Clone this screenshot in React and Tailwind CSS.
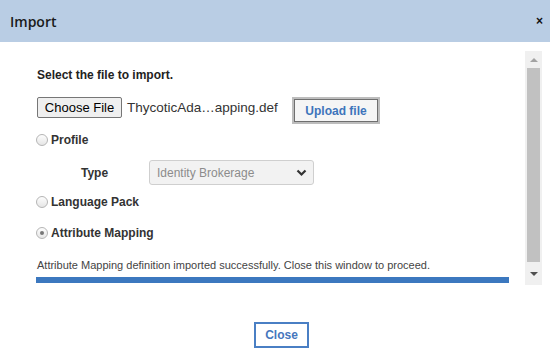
export default function App() {
  const radio = (checked) => (
    <span className="w-[12px] h-[12px] rounded-full border border-[#b5b5b5] bg-gradient-to-b from-[#fdfdfd] to-[#e6e6e6] flex items-center justify-center shrink-0">
      {checked && <span className="w-[4px] h-[4px] rounded-full bg-[#777]" />}
    </span>
  );
  return (
    <div className="w-[550px] h-[360px] bg-white flex flex-col overflow-hidden" style={{ fontFamily: '"Liberation Sans", Arial, sans-serif' }}>
      <div className="h-[42px] bg-[#b9cde4] flex items-center justify-between pl-[10px] pr-[7px] shrink-0">
        <span className="text-[14px] font-semibold text-[#1a1a1a]" style={{ fontFamily: '"Open Sans", sans-serif' }}>Import</span>
        <span className="text-[12px] font-bold text-[#111] leading-none mb-[1px]">×</span>
      </div>
      <div className="flex flex-1">
        <div className="flex-1 flex flex-col pl-[36px] pt-[25px]">
          <div className="text-[12px] font-bold text-[#222] leading-[16px] pl-[1px]">Select the file to import.</div>
          <div className="flex items-start mt-[14px] pl-[1px]">
            <div className="h-[21px] w-[85px] border border-[#767676] rounded-[2px] bg-[#efefef] text-[13px] text-black flex items-center justify-center shrink-0">Choose File</div>
            <span className="ml-[5px] w-[152px] text-[13.5px] text-[#333] leading-[21px] whitespace-nowrap">ThycoticAda…apping.def</span>
            <div className="ml-[13px] h-[27px] w-[88px] border-2 border-[#bdbdbd] bg-[#bdbdbd] shrink-0">
              <div className="w-full h-full border border-[#6f6f6f] bg-[#f5f5f5] flex items-center justify-center text-[12px] font-bold text-[#3d74bb]">Upload file</div>
            </div>
          </div>
          <div className="flex items-center h-[16px] mt-[8px] gap-[3px]">
            {radio(false)}
            <span className="text-[12px] font-bold text-[#333]">Profile</span>
          </div>
          <div className="flex items-center mt-[12px] h-[25px]">
            <span className="ml-[45px] w-[68px] text-[12px] font-bold text-[#333]">Type</span>
            <div className="w-[165px] h-[25px] border border-[#cfcfcf] rounded-[3px] bg-[#f2f2f2] flex items-center justify-between pl-[7px] pr-[6px]">
              <span className="text-[12px] text-[#8c8c8c]">Identity Brokerage</span>
              <svg width="11" height="8" viewBox="0 0 11 8"><path d="M1.5 1.5 L5.5 5.5 L9.5 1.5" fill="none" stroke="#333" strokeWidth="2.2" /></svg>
            </div>
          </div>
          <div className="flex items-center h-[16px] mt-[9px] gap-[3px]">
            {radio(false)}
            <span className="text-[12px] font-bold text-[#333]">Language Pack</span>
          </div>
          <div className="flex items-center h-[16px] mt-[15px] gap-[3px]">
            {radio(true)}
            <span className="text-[12px] font-bold text-[#333]">Attribute Mapping</span>
          </div>
          <div className="mt-[17px] text-[11px] text-[#444] leading-[14px] pl-[1px]">Attribute Mapping definition imported successfully. Close this window to proceed.</div>
          <div className="mt-[5px] h-[6px] w-[473px] bg-[#3c78bf]" />
          <div className="flex mt-[39px] pl-[218px]">
            <div className="w-[55px] h-[26px] border-2 border-[#4a7fc4] flex items-center justify-center text-[12px] font-bold text-[#4677bd]">Close</div>
          </div>
        </div>
        <div className="w-[17px] h-[234px] mt-[9px] mr-[8px] bg-[#f0f0f0] flex flex-col items-center">
          <div className="h-[17px] flex items-center justify-center">
            <svg width="8" height="4" viewBox="0 0 8 4"><path d="M0 4 L4 0 L8 4 Z" fill="#a3a3a3" /></svg>
          </div>
          <div className="w-[13px] h-[194px] bg-[#c1c1c1]" />
          <div className="flex-1 flex items-center justify-center">
            <svg width="8" height="4" viewBox="0 0 8 4"><path d="M0 0 L4 4 L8 0 Z" fill="#505050" /></svg>
          </div>
        </div>
      </div>
    </div>
  );
}
